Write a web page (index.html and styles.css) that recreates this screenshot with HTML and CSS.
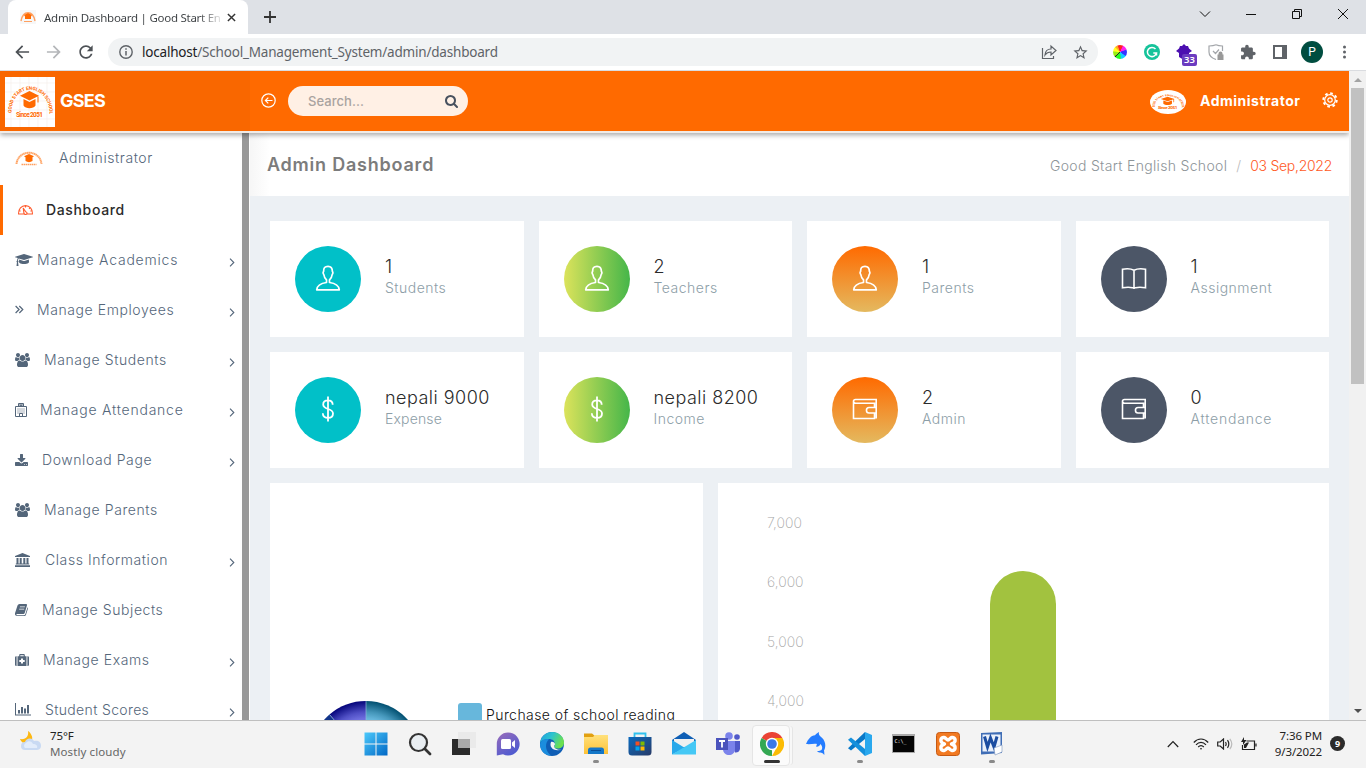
FILE: index.html
```html
<!DOCTYPE html>
<html lang="en">
<head>
<meta charset="utf-8">
<title>Admin Dashboard | Good Start English School</title>
<link rel="stylesheet" href="styles.css">
</head>
<body>
<svg class="defs" width="0" height="0">
  <defs>
    <path id="arc" d="M6.500 36C6 5 44 5 44.500 36"/>
    <linearGradient id="g-win" x2="1" y2="1"><stop stop-color="#4cc9fb"/><stop offset="1" stop-color="#0067c5"/></linearGradient>
    <linearGradient id="g-chat" x2=".6" y2="1"><stop stop-color="#9a6cba"/><stop offset="1" stop-color="#4f5bd0"/></linearGradient>
    <linearGradient id="g-edge" x1="0" y1="0" x2="1" y2=".4"><stop stop-color="#1f9ee0"/><stop offset=".5" stop-color="#2cc3cf"/><stop offset="1" stop-color="#6be04f"/></linearGradient>
    <linearGradient id="g-folder" x2="0" y2="1"><stop stop-color="#ffe17c"/><stop offset="1" stop-color="#fdc136"/></linearGradient>
    <linearGradient id="g-store" x2="1" y2="1"><stop stop-color="#0a6abf"/><stop offset="1" stop-color="#283a66"/></linearGradient>
    <radialGradient id="g-pie-a" gradientUnits="userSpaceOnUse" cx="66" cy="56" r="56"><stop offset=".68" stop-color="#6f6fdf"/><stop offset=".8" stop-color="#4f4fc5"/><stop offset="1" stop-color="#04047a"/></radialGradient>
    <radialGradient id="g-pie-b" gradientUnits="userSpaceOnUse" cx="66" cy="56" r="56"><stop offset=".68" stop-color="#67b7dc"/><stop offset=".8" stop-color="#4597bb"/><stop offset="1" stop-color="#014f70"/></radialGradient>
  </defs>
  <symbol id="cap" viewBox="0 0 2304 1792"><path d="M1774 836l18 316q4 69-82 128t-235 93.500-323 34.500-323-34.500-235-93.500-82-128l18-316 574 181q22 7 48 7t48-7zM2304 512q0 23-22 31l-1120 352q-4 1-10 1t-10-1l-652-206q-43 34-71 111.500t-34 178.500q63 36 63 109 0 69-58 107l58 433q2 14-8 25-9 11-24 11h-192q-15 0-24-11-10-11-8-25l58-433q-58-38-58-107 0-73 65-111 11-207 98-330l-333-104q-22-8-22-31t22-31l1120-352q4-1 10-1t10 1l1120 352q22 8 22 31z"/></symbol>
  <symbol id="users" viewBox="0 0 1920 1792"><path d="M593 896q-162 5-265 128h-134q-82 0-138-40.500t-56-118.500q0-353 124-353 6 0 43.500 21t97.500 42.500 119 21.500q67 0 133-23-5 37-5 66 0 139 81 256zM1664 1533q0 120-73 189.500t-194 69.500h-874q-121 0-194-69.500t-73-189.500q0-53 3.500-103.500t14-109 26.500-108.500 43-97.500 62-81 85.500-53.500 111.500-20q10 0 43 21.500t73 48 107 48 135 21.500 135-21.500 107-48 73-48 43-21.500q61 0 111.500 20t85.500 53.500 62 81 43 97.500 26.500 108.500 14 109 3.500 103.500zM640 256q0 106-75 181t-181 75-181-75-75-181 75-181 181-75 181 75 75 181zM1344 640q0 159-112.500 271.500t-271.500 112.500-271.500-112.500-112.500-271.500 112.500-271.500 271.500-112.500 271.500 112.500 112.500 271.500zM1920 865q0 78-56 118.500t-138 40.500h-134q-103-123-265-128 81-117 81-256 0-29-5-66 66 23 133 23 59 0 119-21.500t97.500-42.500 43.500-21q124 0 124 353zM1792 256q0 106-75 181t-181 75-181-75-75-181 75-181 181-75 181 75 75 181z"/></symbol>
  <symbol id="person" viewBox="0 0 26 26"><path fill="none" stroke="#fff" stroke-width="1.700" stroke-linejoin="round" d="M11.500 17.500v-2.700C9.600 13 9 11.500 8.800 9.500 7.800 8.500 8 7 8.600 6.500 8.600 3 9.800 1.300 13 1.300s4.400 1.700 4.400 5.200c.6.500.8 2-.2 3-.2 2-.8 3.500-2.700 5.300v2.700c6 .8 9.300 2.600 9.800 7.300H1.700c.5-4.700 3.800-6.500 9.800-7.300z"/></symbol>
  <symbol id="dollar" viewBox="0 0 26 26"><path fill="none" stroke="#fff" stroke-width="1.800" d="M13 .6v24.800M17.700 8.800C17.700 5.800 16 4.300 13 4.300s-4.800 1.500-4.800 4.200c0 5.800 9.800 3.200 9.800 9 0 2.800-2 4.400-5 4.400s-5.200-1.600-5.200-4.600"/></symbol>
  <symbol id="wallet" viewBox="0 0 26 26"><path fill="none" stroke="#fff" stroke-width="1.600" d="M1.500 4.500v18h21v-5M22.500 11.500V7.200H3.500C.8 7 .9 3.500 3.500 3.500h20.700v19M24.500 11.500H17c-3.400 0-3.400 5.500 0 5.500h7.500"/></symbol>
  <symbol id="book" viewBox="0 0 26 26"><path fill="none" stroke="#fff" stroke-width="1.600" d="M13 5.200C10 3.600 6 3.400 1.500 4.200v18.600c4-.8 7.500-.8 10 0h3c2.500-.8 6-.8 10 0V4.200C20 3.400 16 3.600 13 5.200zM13 5v19"/></symbol>
  <symbol id="chev" viewBox="0 0 6 9"><path fill="none" stroke="currentColor" stroke-width="1.100" d="M1 .7l3.800 3.800L1 8.300"/></symbol>
</svg>

<header class="tabstrip">
  <div class="tab">
    <svg class="favicon" viewBox="0 0 16 14"><path fill="none" stroke="#ffa060" stroke-width="1.400" d="M1 11C3 0 13 0 15 11"/><path fill="#ff6a00" d="M8 3l4 2-1 1.500V9H5V6.500L4 5z"/><path stroke="#ffa060" d="M4 11.500h8"/></svg>
    <span class="tab-title">Admin Dashboard | Good Start En</span>
    <svg class="tab-close" viewBox="0 0 10 10"><path stroke="#333" stroke-width="1.600" d="M1 1l8 8M9 1L1 9"/></svg>
  </div>
  <svg class="newtab" viewBox="0 0 12 12"><path stroke="#333" stroke-width="1.800" d="M6 0v12M0 6h12"/></svg>
  <div class="winctl">
    <svg viewBox="0 0 12 12"><path d="M1 3.500l5 5 5-5"/></svg>
    <svg viewBox="0 0 12 12"><path d="M1 6.500h10"/></svg>
    <svg viewBox="0 0 12 12"><path d="M1.500 3.500h7v7h-7zM3.500 3.500v-2h7v7h-2"/></svg>
    <svg viewBox="0 0 12 12"><path d="M1 1l10 10M11 1L1 11"/></svg>
  </div>
</header>

<div class="toolbar">
  <svg class="nav" viewBox="0 0 24 24"><path d="M20.500 11H7.830l5.590-5.590L12 4l-8 8 8 8 1.410-1.410L7.830 13H20.500z"/></svg>
  <svg class="nav off" viewBox="0 0 24 24"><path d="M3.500 11h12.670l-5.590-5.590L12 4l8 8-8 8-1.410-1.410L16.170 13H3.500z"/></svg>
  <svg class="nav" viewBox="0 0 24 24"><path d="M17.650 6.350C16.200 4.900 14.210 4 12 4c-4.420 0-7.990 3.580-7.990 8s3.570 8 7.990 8c3.730 0 6.840-2.550 7.730-6h-2.080c-.82 2.330-3.040 4-5.650 4-3.310 0-6-2.690-6-6s2.690-6 6-6c1.660 0 3.140.69 4.220 1.780L13 11h7V4l-2.350 2.350z"/></svg>
  <div class="omnibox">
    <svg class="info" viewBox="0 0 14 14"><circle cx="7" cy="7" r="6.200" fill="none" stroke="#5f6368" stroke-width="1.400"/><path stroke="#5f6368" stroke-width="1.500" d="M7 6v4.500M7 3.300v1.500"/></svg>
    <span class="url"><b>localhost</b>/School_Management_System/admin/dashboard</span>
    <svg class="share" viewBox="0 0 16 16"><path fill="none" stroke="#5f6368" stroke-width="1.200" d="M1.500 4v10.500h11V12M4 11c.3-4 2.500-6 6-6V2l5 4.500-5 4.500V8c-3 0-4.500.8-6 3z"/></svg>
    <svg class="star" viewBox="0 0 24 24"><path fill="#5f6368" d="M22 9.240l-7.190-.62L12 2 9.190 8.630 2 9.240l5.460 4.730L5.820 21 12 17.270 18.180 21l-1.630-7.030L22 9.240zM12 15.400l-3.760 2.270 1-4.280-3.320-2.880 4.380-.38L12 6.100l1.710 4.040 4.380.38-3.320 2.880 1 4.280L12 15.400z"/></svg>
  </div>
  <div class="exts">
    <i class="wheel"></i>
    <svg viewBox="0 0 16 16"><circle cx="8" cy="8" r="8" fill="#15c39a"/><path fill="none" stroke="#fff" stroke-width="1.500" d="M11.500 5A4.600 4.600 0 1 0 12.500 9H9.300M12.500 8.500v3"/></svg>
    <span class="ext-badged"><svg viewBox="0 0 16 16"><path fill="#4b0fb0" d="M8 0l2 2h2l1 2.500L16 7l-3 2v4L8 16l-5-3V9L0 7l3-2.500L4 2h2z"/></svg><em>33</em></span>
    <svg viewBox="0 0 16 16"><g fill="none" stroke="#a3a6aa" stroke-width="1.200"><path d="M8 .8C5.500 2 3 2 1 2v6c0 4 4 6.500 7 7.500M8 .8c2.500 1.200 4.500 1.200 6.500 1.200v5M5 7l2.500 2.500L11 5.500"/></g><path fill="#999" d="M9.500 10.500h1v-1a2 2 0 0 1 4 0v1h1V16h-6z"/></svg>
    <svg viewBox="1 0 22 23"><path fill="#5f6368" d="M20.500 11H19V7c0-1.100-.9-2-2-2h-4V3.500C13 2.120 11.880 1 10.500 1S8 2.120 8 3.500V5H4c-1.100 0-1.990.9-1.990 2v3.800H3.500c1.490 0 2.700 1.210 2.700 2.700s-1.210 2.700-2.700 2.700H2V20c0 1.100.9 2 2 2h3.800v-1.500c0-1.490 1.210-2.700 2.700-2.700 1.490 0 2.700 1.210 2.700 2.700V22H17c1.100 0 2-.9 2-2v-4h1.500c1.380 0 2.500-1.120 2.500-2.500S21.880 11 20.500 11z"/></svg>
    <svg viewBox="0 0 16 16"><path fill="#5f6368" fill-rule="evenodd" d="M1 1h14v14H1zM3 3v10h7V3z"/></svg>
    <b class="avatar">P</b>
    <svg viewBox="0 0 16 16"><g fill="#5f6368"><circle cx="8.500" cy="3" r="1.500"/><circle cx="8.500" cy="8" r="1.500"/><circle cx="8.500" cy="13" r="1.500"/></g></svg>
  </div>
</div>

<div class="viewport">
  <div class="page">
    <header class="topbar">
      <div class="brand">
        <svg class="brand-logo" viewBox="0 0 50 50">
          <path stroke="#f3ece8" stroke-width=".6" d="M6 0v50M15 0v50M24 0v50M33 0v50M42 0v50M0 6h50M0 15h50M0 24h50M0 33h50M0 42h50"/>
          <path fill="#ff6a00" d="M24.500 14l9.500 4.700-9.500 4.700-9.500-4.700zM18.500 22l6 3 6-3v6.500c-2 3.500-10 3.500-12 0zM32.500 19.500h1v6h-1z"/>
          <text class="crest-arc"><textPath href="#arc" textLength="68">GOOD START ENGLISH SCHOOL</textPath></text>
          <text class="crest-year" x="11" y="40" textLength="27">Since 2051</text>
        </svg>
        <strong>GSES</strong>
      </div>
      <svg class="collapse" viewBox="0 0 15 15"><path fill="none" stroke="#fff" stroke-width="1.200" d="M7.500.8a6.700 6.700 0 1 1 0 13.400a6.700 6.700 0 1 1 0-13.400M11.500 7.500h-7M7.300 4.600L4.400 7.500l2.900 2.900"/></svg>
      <div class="search"><span>Search...</span><svg viewBox="64 128 1664 1664"><path d="M1216 832q0-185-131.500-316.500t-316.500-131.500-316.500 131.500-131.500 316.500 131.500 316.500 316.500 131.500 316.500-131.500 131.500-316.500zm512 832q0 52-38 90t-90 38q-54 0-90-38l-343-342q-179 124-399 124-143 0-273.500-55.500t-225-150-150-225-55.500-273.500 55.500-273.500 150-225 225-150 273.500-55.500 273.500 55.500 225 150 150 225 55.500 273.500q0 220-124 399l343 343q37 37 37 90z"/></svg></div>
      <svg class="user-logo" viewBox="0 0 50 50" preserveAspectRatio="none">
        <path fill="#ff6a00" d="M24.500 14l9.500 4.700-9.500 4.700-9.500-4.700zM18.500 22l6 3 6-3v6.500c-2 3.500-10 3.500-12 0zM32.500 19.500h1v6h-1z"/>
        <text class="crest-arc"><textPath href="#arc" textLength="68">GOOD START ENGLISH SCHOOL</textPath></text>
        <text class="crest-year" x="11" y="40" textLength="27">Since 2051</text>
      </svg>
      <strong class="user-name">Administrator</strong>
      <svg class="gear" viewBox="0 0 16 16"><g fill="none" stroke="#fff"><circle cx="8" cy="8" r="5.300" stroke-width="1.200"/><circle cx="8" cy="8" r="2.200" stroke-width="1.200"/><circle cx="8" cy="8" r="6.700" stroke-width="2" stroke-dasharray="2.630"/></g></svg>
    </header>
    <div class="body">
      <nav class="side">
        <a class="profile"><svg class="mini" viewBox="0 0 28 16"><path fill="none" stroke="#ffa668" stroke-width="2" stroke-dasharray="1.500 .3" d="M1.500 13C3-2 25-2 26.500 13"/><path fill="#ff6a00" d="M14 3l5 2.300-1.500 1V10c-2 1.500-5 1.500-7 0V6.300l-1.500-1z"/><path stroke="#ffa060" stroke-width="1.500" stroke-dasharray="1.500 .5" d="M6.500 13.500h15"/></svg><span>Administrator</span></a>
        <a class="active"><i class="w28"><svg width="15" height="10" viewBox="0 0 15 10"><path fill="none" stroke="#ff5a2c" stroke-width="1.100" d="M6 9H.6C.3 4 3.500.6 7.500.6S14.700 4 14.400 9H9M6 8.500a1.600 1.600 0 0 0 3 0 1.600 1.600 0 0 0-1.300-1.800L5.200 3zM7.500.6v2M.8 6h1.800M12.400 6h1.800M12.200 2.700L11 3.900"/></svg></i><span>Dashboard</span></a>
        <a><i class="w22"><svg width="18" height="14"><use href="#cap"/></svg></i><span class="wide">Manage Academics</span><svg class="chev"><use href="#chev"/></svg></a>
        <a><i class="w22"><svg width="9" height="9" viewBox="0 0 9 9"><path fill="none" stroke="currentColor" stroke-width="1.200" d="M.6 1l3.500 3.500L.6 8M4.300 1l3.500 3.500L4.300 8"/></svg></i><span>Manage Employees</span><svg class="chev"><use href="#chev"/></svg></a>
        <a><i class="w29"><svg width="15" height="14"><use href="#users"/></svg></i><span>Manage Students</span><svg class="chev"><use href="#chev"/></svg></a>
        <a><i class="w25"><svg width="12" height="14" viewBox="0 0 12 14"><path fill="none" stroke="currentColor" d="M.5 13.500v-10h11v10zM3.500 3.500v-3h5v3M4.500 13.500v-3h3v3"/><path stroke="currentColor" stroke-dasharray="1 1" d="M2.500 6h7M2.500 8h7M2.500 10h7"/><path stroke="currentColor" d="M5 1v2.500M7 1v2.500M5 2.300h2"/></svg></i><span class="wide">Manage Attendance</span><svg class="chev"><use href="#chev"/></svg></a>
        <a><i class="w27"><svg width="13" height="12" viewBox="64 0 1664 1536"><path d="M1344 1344q0-26-19-45t-45-19-45 19-19 45 19 45 45 19 45-19 19-45zM1600 1344q0-26-19-45t-45-19-45 19-19 45 19 45 45 19 45-19 19-45zM1728 1120v320q0 40-28 68t-68 28h-1472q-40 0-68-28t-28-68v-320q0-40 28-68t68-28h465l135 136q58 56 136 56t136-56l136-136h464q40 0 68 28t28 68zM1403 551q17 41-14 70l-448 448q-18 19-45 19t-45-19l-448-448q-31-29-14-70 17-39 59-39h256v-448q0-26 19-45t45-19h256q26 0 45 19t19 45v448h256q42 0 59 39z" fill-rule="evenodd"/></svg></i><span>Download Page</span><svg class="chev"><use href="#chev"/></svg></a>
        <a><i class="w29"><svg width="15" height="14"><use href="#users"/></svg></i><span>Manage Parents</span></a>
        <a><i class="w30"><svg width="15" height="14" viewBox="0 0 15 14"><path d="M7.500 0L15 3v1H0V3zM1.500 5h2v5.500h1.200V5h2v5.500h1.600V5h2v5.500h1.200V5h2v5.500h.7v1H.8v-1h.7zM0 12.300h15V14H0z"/></svg></i><span>Class Information</span><svg class="chev"><use href="#chev"/></svg></a>
        <a><i class="w27"><svg width="13" height="12" viewBox="0 0 13 12"><path fill-rule="evenodd" d="M4.500 0H11q1.300 0 1 1.300L9.700 9q-.4 1-1.300 1H2q-.8 0-.5.700t1 .5h6.500q1 0 1.300-1l2.300-7q.6.500.3 1.500l-2 6.300q-.4 1-1.300 1H2q-2.500-.5-2-2.800L2.500 1.500Q3 0 4.500 0zM5 2.500l-.2.800h5l.2-.8zM4.300 4.700l-.2.800h5l.2-.8z"/></svg></i><span>Manage Subjects</span></a>
        <a><i class="w28"><svg width="14" height="12" viewBox="0 0 14 12"><path fill-rule="evenodd" d="M0 3.500Q0 2.200 1.300 2.200H1.600V12H1.300Q0 12 0 10.800zM2.500 2.200H4.200V1Q4.200 0 5.200 0H8.800Q9.800 0 9.800 1v1.200h1.700V12h-9zM5.300 1.200v1h3.400v-1zM6 4.500V6H4.300v2H6v1.500h2V8h1.700V6H8V4.500zM12.400 2.200h.3Q14 2.200 14 3.500v7.300Q14 12 12.700 12h-.3z"/></svg></i><span>Manage Exams</span><svg class="chev"><use href="#chev"/></svg></a>
        <a><i class="w30"><svg width="16" height="13" viewBox="0 0 16 13"><path d="M0 0h1v11.500h15v1H0zM3 7h2v3.500H3zM6 4h2v6.500H6zM9 5.500h2v5H9zM12 2h2v8.500h-2z"/></svg></i><span class="tight">Student Scores</span><svg class="chev"><use href="#chev"/></svg></a>
      </nav>
      <div class="side-scroll"></div>
      <main>
        <div class="title-row"><h1>Admin Dashboard</h1><p><span class="school">Good Start English School</span><span class="slash">/</span><span class="date">03 Sep,2022</span></p></div>
        <div class="content">
          <section class="cards">
            <article><i class="teal"><svg><use href="#person"/></svg></i><div><h3>1</h3><p>Students</p></div></article>
            <article><i class="green"><svg><use href="#person"/></svg></i><div><h3>2</h3><p>Teachers</p></div></article>
            <article><i class="amber"><svg><use href="#person"/></svg></i><div><h3>1</h3><p>Parents</p></div></article>
            <article><i class="slate"><svg><use href="#book"/></svg></i><div><h3>1</h3><p>Assignment</p></div></article>
            <article><i class="teal"><svg><use href="#dollar"/></svg></i><div><h3>nepali 9000</h3><p class="tight">Expense</p></div></article>
            <article><i class="green"><svg><use href="#dollar"/></svg></i><div><h3>nepali 8200</h3><p>Income</p></div></article>
            <article><i class="amber"><svg><use href="#wallet"/></svg></i><div><h3>2</h3><p>Admin</p></div></article>
            <article><i class="slate"><svg><use href="#wallet"/></svg></i><div><h3>0</h3><p class="wide">Attendance</p></div></article>
          </section>
          <section class="charts">
            <div class="pie-card">
              <svg class="pie" viewBox="0 0 132 132"><path fill="url(#g-pie-b)" d="M66 56V0A56 56 0 0 1 122 56z"/><path fill="url(#g-pie-a)" d="M66 56V0A56 56 0 0 0 29.500 13.500z"/><path fill="#12348a" d="M66 56L29.500 13.500A56 56 0 0 0 10 56z"/><path fill="none" stroke="#8fb4dc" stroke-width=".7" d="M66 0v56M29.500 13.500L66 56"/></svg>
              <div class="legend"><i></i><span>Purchase of school reading</span></div>
            </div>
            <div class="bar-card">
              <ol><li>7,000</li><li>6,000</li><li>5,000</li><li>4,000</li></ol>
              <div class="bar"></div>
            </div>
          </section>
        </div>
      </main>
    </div>
  </div>
  <div class="scrollbar"><i class="up"></i><i class="thumb"></i><i class="down"></i></div>
</div>

<footer class="taskbar">
  <div class="weather">
    <svg viewBox="0 0 22 20"><path fill="#fdb813" d="M9 0c1 5-2 9-8 8 2 6 10 6 12 1C14 6 12 2 9 0z"/><path fill="#c9daf3" d="M6 19a4 4 0 0 1 0-8c1-4 7-5 9-1 4-1 7 1 7 4.500S20 19 17 19z"/><path fill="#e3edfb" d="M6 17a3 3 0 0 1 1-5c2-3 6-2 7 1 3 0 5 2 4 4z"/></svg>
    <div><b>75°F</b><span>Mostly cloudy</span></div>
  </div>
  <div class="apps">
    <span><svg viewBox="0 0 24 24"><path fill="url(#g-win)" d="M.5.500h11v11H.5zM12.500.5h11v11h-11zM.5 12.500h11v11H.5zM12.500 12.500h11v11h-11z"/></svg></span>
    <span><svg viewBox="0 0 24 24"><circle cx="10.500" cy="10.500" r="8.500" fill="#e9eef2" stroke="#333" stroke-width="2.200"/><path stroke="#333" stroke-width="2.800" stroke-linecap="round" d="M17 17l5 5"/></svg></span>
    <span><svg viewBox="0 0 24 24"><path fill="#2b2b2b" d="M0 7h18v16H0z"/><path fill="#e9e9e9" opacity=".9" d="M6 0h18v16H6z"/><path fill="#a9a9a9" d="M6 7h12v9H6z"/></svg></span>
    <span><svg viewBox="0 0 24 24"><path fill="url(#g-chat)" d="M12 .5a11.500 11.500 0 1 1-5 21.800L.8 23.500V12A11.300 11.300 0 0 1 12 .5z"/><rect x="5" y="7" width="10" height="10" rx="1.500" fill="#fff"/><path fill="#fff" d="M16 10.500L19 8v8l-3-2.500z"/></svg></span>
    <span><svg viewBox="0 0 24 24"><circle cx="12" cy="12" r="12" fill="#0f5eb5"/><path fill="url(#g-edge)" d="M0 11C1 4 6 0 12 0c7 0 12 5 12 10.500 0 4-3 6-6.500 6-3 0-4-1.500-3-3C16 9 12 7 9 7c-4 0-7 1-9 4z"/><path fill="#1b8ddd" d="M0 12c2-5 6-5.500 9-4.500-4 3-4.500 11 2 16C4 23.500 0 18 0 12z"/><path fill="#f3f3f3" d="M11 10c-2 5 2 10 11.500 7.500-2 .5-5 .5-7-1s-1.500-3-.5-4c0-2-2-3-4-2.500z"/></svg></span>
    <span class="open"><svg viewBox="0 0 24 24"><path fill="#e2a010" d="M0 1.500h8L11 4v5H0z"/><path fill="url(#g-folder)" d="M0 5h9l2-2h13v19H0z"/><path fill="#1477c8" d="M4 22v-4q0-2.500 2.500-2.500h11Q20 15.500 20 18v4z"/><path stroke="#0a4e97" d="M7 18.500h10"/></svg></span>
    <span><svg viewBox="0 0 24 24"><path fill="none" stroke="#2fc1ee" stroke-width="1.800" d="M6.500 5V1.500h11V5"/><path fill="url(#g-store)" d="M.5 5h23v15q0 3.500-3.500 3.500H4Q.5 23.500.5 20z"/><path fill="#f25022" d="M7.500 9.500h4v4h-4z"/><path fill="#7fba00" d="M12.500 9.500h4v4h-4z"/><path fill="#00a4ef" d="M7.500 14.500h4v4h-4z"/><path fill="#ffb900" d="M12.500 14.500h4v4h-4z"/></svg></span>
    <span><svg viewBox="0 0 24 24"><path fill="#0f5fb5" d="M0 8l12-8 12 8v8H0z"/><path fill="#f0f0f0" d="M2 7h20v8H2z"/><path fill="#27a8ea" d="M0 8l13 8-13 6.500z"/><path fill="#45c8f5" d="M24 8v14.500H0z"/></svg></span>
    <span><svg viewBox="0 0 24 24"><circle cx="13" cy="4" r="3.800" fill="#7b83eb"/><circle cx="21" cy="5" r="2.800" fill="#5059c9"/><path fill="#5059c9" d="M15 9h9v8q-1 4-5 3.500z"/><path fill="#7b83eb" d="M7 9h12v8c0 8-12 8-12 0z"/><path fill="#4b53bc" d="M0 6h12v12H0z"/><path stroke="#fff" stroke-width="1.800" d="M3 9h6M6 9v6.500"/></svg></span>
    <span class="current"><svg viewBox="0 0 24 24"><path fill="#ea4335" d="M12 12L1.600 6A12 12 0 0 1 22.400 6z"/><path fill="#34a853" d="M12 12L12 24A12 12 0 0 1 1.600 6z"/><path fill="#fbbc05" d="M12 6h10.400A12 12 0 0 1 12 24l5-9z"/><circle cx="12" cy="12" r="6.200" fill="#fff"/><circle cx="12" cy="12" r="4.800" fill="#3b78e7"/></svg></span>
    <span><svg viewBox="0 0 24 24"><path fill="#247cff" d="M2 12c2-5 5-8.500 9-8.800C12.500 1.500 14 .5 15 0c-.5 2 0 3 1.500 4.500 5 3.500 6 10 3.500 14 .3 2 .5 3 .3 4.500-1.500-1.800-2.800-2.500-4-2.500-1.300 0-2.300-.3-3.300-1.500 3 0 4.500-.5 5-2 .7-2-.5-4-1.500-5-.5 1.500-2 2.500-4 3-.3-1.200 0-2 .5-3C10 11.500 6 12.500 2 12z"/></svg></span>
    <span class="open"><svg viewBox="0 0 24 24"><path fill="#29a8ee" d="M17 0l7 3v18l-7 3z"/><path fill="#0878c8" d="M17 0v7L3 18.500l-3-2.300z"/><path fill="#1590dc" d="M0 7.800L3 5.500 17 17v7z"/></svg></span>
    <span><svg viewBox="0 0 24 24"><path fill="#aaa" d="M0 2h23v19H0z"/><path fill="#050505" d="M1 4h21v16H1z"/><text class="cmd" x="2.500" y="10.500">C:\_</text></svg></span>
    <span><svg viewBox="0 0 24 24"><rect x=".5" y=".5" width="23" height="23" rx="3" fill="#f27a22" stroke="#c65a14"/><path fill="none" stroke="#fff" stroke-width="3.400" stroke-linejoin="round" d="M8.500 12C3 10.500 4.500 5 8 5.500c2 .3 2.500 2.500 4 2.500s2-2.200 4-2.500c3.500-.5 5 5-.500 6.500 5.500 1.500 4 7 .5 6.500-2-.3-2.500-2.500-4-2.500s-2 2.200-4 2.500c-3.500.5-5-5 .5-6.500z"/></svg></span>
    <span class="open"><svg viewBox="0 0 24 24"><path fill="#3f6db5" d="M1 1l21-1v21l-21 1.500z"/><path fill="#eaf1fb" d="M2.500 2.500h18v17h-18z"/><path fill="none" stroke="#1c4da1" stroke-width="3" d="M4.500 4.500L7.500 15l3-9L14 15l3-10.500"/><path fill="#fff" stroke="#7a93bd" stroke-width=".6" d="M14 16l8-3v7l-7 3z"/></svg></span>
  </div>
  <div class="tray">
    <svg class="caret" viewBox="0 0 12 8"><path d="M.8 7L6 1.500 11.200 7"/></svg>
    <svg class="wifi" viewBox="0 0 16 12"><path d="M.8 4.500C5-.2 11-.2 15.200 4.500M3 6.800c3-3.200 7-3.200 10 0M5.200 9c1.700-1.900 3.900-1.900 5.600 0"/><circle cx="8" cy="10.700" r=".8"/></svg>
    <svg class="vol" viewBox="0 0 16 12"><path d="M.7 4h2.500L6.500 1v10L3.200 8H.7zM8.500 4q1.300 2 0 4M10.500 2.200q2.600 3.800 0 7.600"/><path class="faint" d="M12.800.8q4 5.200 0 10.400"/></svg>
    <svg class="bat" viewBox="0 0 16 14"><path d="M5.500 4H13.500v8.500H1.500V8M15 6.500v3"/><path class="solid" d="M3 0L0 5h2v3l3.500-5H3zM3 11V7.500l3-2h2L5 11z"/></svg>
    <div class="clock"><span>7:36 PM</span><span>9/3/2022</span></div>
    <b class="count">9</b>
  </div>
</footer>
</body>
</html>
```
FILE: styles.css
```css
* { box-sizing: border-box; }
body { margin: 0; width: 1366px; height: 768px; overflow: hidden; display: flex; flex-direction: column; background: #fff; font-family: "Noto Sans", sans-serif; }
svg { display: block; flex: none; }
h1, h3, p, ol { margin: 0; padding: 0; }
i { font-style: normal; display: block; }
.defs { position: absolute; }
.crest-arc { font: 700 4.800px Roboto, sans-serif; fill: #ff6a00; }
.crest-year { font: 700 6.500px Roboto, sans-serif; fill: #ff6a00; }

/* browser frame */
.tabstrip { height: 34px; flex: none; background: #dee1e6; display: flex; align-items: center; padding-left: 8px; }
.tab { width: 240px; height: 34px; background: #fff; border-radius: 8px 8px 0 0; display: flex; align-items: center; padding-left: 12px; }
.favicon { width: 16px; height: 14px; background: #f7f7f7; }
.tab-title { width: 176px; margin: 0 7px 0 8px; white-space: nowrap; font-size: 11.500px; letter-spacing: -.26px; color: transparent; background: linear-gradient(90deg, #3c4043 88%, #ddd 100%); -webkit-background-clip: text; background-clip: text; }
.tab-close { width: 9px; height: 9px; }
.newtab { width: 12px; height: 12px; margin-left: 16px; }
.winctl { margin-left: auto; display: flex; gap: 34px; padding: 0 17px 6px 0; }
.winctl svg { width: 12px; height: 12px; }
.winctl path { fill: none; stroke: #111; }
.toolbar { height: 36px; flex: none; display: flex; align-items: center; padding-left: 12px; }
.nav { width: 20px; height: 20px; margin-right: 12px; fill: #4d5156; }
.nav.off { fill: #b4b6b9; }
.omnibox { width: 990px; height: 28px; border-radius: 14px; background: #f1f3f4; display: flex; align-items: center; padding-left: 11px; }
.info { width: 14px; height: 14px; }
.url { flex: 1; margin-left: 9px; font-size: 13.500px; letter-spacing: -.2px; color: #5f6368; white-space: nowrap; }
.url b { font-weight: 400; color: #202124; }
.share { width: 16px; height: 16px; margin-right: 15px; }
.star { width: 17px; height: 17px; margin-right: 9px; }
.exts { display: grid; grid-template-columns: repeat(8, 32px); align-items: center; justify-items: center; margin-left: 6px; }
.exts svg { width: 16px; height: 16px; }
.wheel { width: 14px; height: 14px; border-radius: 50%; background: conic-gradient(#f22 20deg, #f2e 30deg 65deg, #33f 75deg 120deg, #1cf 130deg 165deg, #2f2 180deg 220deg, #222 225deg, #9e1 235deg 270deg, #ff2 280deg 310deg, #fa2 320deg 335deg, #f22 345deg); }
.ext-badged { position: relative; }
.ext-badged em { position: absolute; left: 6px; top: 10px; width: 15px; height: 12px; border-radius: 2px; background: #6b3bc0; color: #fff; font: 600 9.500px/12px "Noto Sans", sans-serif; text-align: center; }
.avatar { width: 22px; height: 22px; border-radius: 50%; background: #004d40; color: #fff; font: 400 12px/22px Roboto, sans-serif; text-align: center; }

/* page */
.viewport { height: 650px; flex: none; display: flex; overflow: hidden; border-top: 1px solid #dadce0; font-family: Inter, sans-serif; }
.page { width: 1349px; height: 649px; overflow: hidden; display: flex; flex-direction: column; }
.topbar { position: relative; z-index: 2; height: 62px; flex: none; background: #ff6a00; border-bottom: 2px solid #f1ebe6; box-shadow: 0 2px 5px rgba(0,0,0,.35); display: flex; align-items: center; color: #fff; }
.brand { width: 250px; height: 60px; background: #f96700; display: flex; align-items: center; gap: 5px; padding-left: 5px; }
.brand-logo { width: 50px; height: 50px; background: #fff; margin-top: 2px; }
.brand strong { font-size: 18px; letter-spacing: -.75px; padding-bottom: 1px; }
.collapse { width: 15px; height: 15px; margin: 0 12px 2px 11px; }
.search { width: 180px; height: 30px; border-radius: 15px; background: #fff0e5; display: flex; align-items: center; justify-content: space-between; padding: 0 10px 0 20px; font-size: 13px; font-weight: 500; letter-spacing: .05px; color: #a9a3a0; }
.search span { padding-bottom: 1px; }
.search svg { width: 13px; height: 13px; fill: #48515f; }
.user-logo { width: 36px; height: 24px; border-radius: 50%; background: #fff; margin: 2px 14px 0 auto; }
.user-name { width: 100px; font-size: 14px; font-weight: 700; letter-spacing: .5px; white-space: nowrap; padding-bottom: 1px; }
.gear { width: 16px; height: 16px; margin: 0 11px 3px 22px; }
.body { flex: 1; display: flex; min-height: 0; }
.side { width: 242px; overflow: hidden; color: #54667a; }
.side a { height: 50px; display: flex; align-items: center; padding-left: 15px; font-size: 14px; font-weight: 300; letter-spacing: .58px; white-space: nowrap; }
.side a span { padding-bottom: 2px; }
.side .wide { letter-spacing: .77px; }
.side .tight { letter-spacing: .35px; }
.side a i { padding-bottom: 1px; }
.side a i svg { fill: currentColor; }
.side .profile { height: 52px; }
.side .profile span { padding-bottom: 3px; }
.mini { width: 28px; height: 16px; margin-right: 16px; }
.side .active { border-left: 3px solid #ff6a00; color: #2b2b2b; font-weight: 500; letter-spacing: .65px; }
.w22 { width: 22px; } .w25 { width: 25px; } .w27 { width: 27px; } .w28 { width: 28px; } .w29 { width: 29px; } .w30 { width: 30px; }
.chev { width: 6px; height: 9px; margin: 4px 7px 0 auto; }
.side-scroll { width: 8px; background: #999; border-right: 1px solid #fff; }
main { flex: 1; background: #ecf0f4; }
.title-row { height: 63px; background: linear-gradient(90deg, #f6f6f6, #fff 20px); display: flex; align-items: center; justify-content: space-between; padding: 0 17px; }
h1 { font-size: 18px; font-weight: 600; letter-spacing: .78px; color: #7c7c7c; }
.title-row p { display: flex; font-size: 14px; font-weight: 300; padding-top: 2px; }
.school { color: #8d9498; letter-spacing: .32px; }
.slash { color: #bbb; margin: 0 9px; }
.date { color: #ff5a26; letter-spacing: -.27px; }
.content { padding: 25px 20px; }
.cards { display: grid; grid-template-columns: repeat(4, 1fr); grid-auto-rows: 116px; gap: 15px; }
.cards article { background: #fff; display: flex; padding: 25px; gap: 24px; }
.cards i { width: 66px; height: 66px; border-radius: 50%; display: flex; align-items: center; justify-content: center; padding-bottom: 2px; }
.cards i svg { width: 26px; height: 26px; }
.teal { background: #01c0c8; }
.green { background: linear-gradient(90deg, #dce35b, #45b649); }
.amber { background: linear-gradient(#ff6a00, #e4b95f); }
.slate { background: #4c5667; }
.cards h3 { font-size: 18px; font-weight: 300; line-height: 24px; letter-spacing: .48px; margin-top: 9px; color: #2b2b2b; white-space: nowrap; }
.cards p { font-size: 14px; font-weight: 300; line-height: 18px; letter-spacing: .5px; color: #8d9ea7; }
.cards .wide { letter-spacing: .8px; }
.cards .tight { letter-spacing: .15px; }
.charts { display: grid; grid-template-columns: 433px 1fr; gap: 15px; margin-top: 15px; height: 300px; }
.charts > div { background: #fff; display: flex; }
.pie { width: 132px; height: 132px; margin: 218px 0 0 30px; }
.legend { display: flex; gap: 4px; margin: 220px 0 0 26px; }
.legend i { width: 24px; height: 24px; border-radius: 3px; background: #67b7dc; }
.legend span { font-size: 14px; font-weight: 300; line-height: 24px; letter-spacing: .43px; color: #111; white-space: nowrap; }
.bar-card ol { list-style: none; width: 222px; padding: 30px 0 0 49px; margin-right: 50px; font-size: 14px; font-weight: 200; color: #a5a5a5; }
.bar-card li { height: 59.300px; line-height: 20px; }
.bar { width: 66px; height: 220px; margin-top: 88px; border-radius: 33px 33px 0 0; background: #a2c23f; }
.scrollbar { width: 17px; background: #f1f1f1; display: flex; flex-direction: column; align-items: center; }
.up { border: 4px solid transparent; border-top: 0; border-bottom: 4px solid #a3a3a3; margin: 7px 0 6px; }
.thumb { width: 13px; height: 296px; background: #c1c1c1; }
.down { border: 4px solid transparent; border-bottom: 0; border-top: 4px solid #505050; margin: auto 0 7px; }

/* taskbar */
.taskbar { height: 48px; flex: none; background: #f3f3f3; border-top: 1px solid #bfbfbf; display: grid; grid-template-columns: 354px 660px 1fr; align-items: center; }
.weather { display: flex; gap: 9px; padding: 0 0 2px 19px; align-items: center; }
.weather svg { width: 22px; height: 20px; margin-bottom: 6px; }
.weather b, .weather span { display: block; font-size: 11.500px; line-height: 16px; font-weight: 400; color: #222; letter-spacing: -.1px; }
.weather span { color: #666; letter-spacing: .1px; }
.apps { display: grid; grid-template-columns: repeat(15, 44px); height: 47px; }
.apps span { position: relative; display: flex; align-items: center; justify-content: center; padding-bottom: 1px; }
.apps svg { width: 24px; height: 24px; }
.cmd { font: 5px "DejaVu Sans Mono", monospace; fill: #fff; }
.open::after, .current::after { content: ""; position: absolute; left: 19px; top: 39px; width: 6px; height: 3px; border-radius: 2px; background: #8a8a8a; }
.current::after { left: 14px; width: 16px; background: #333; }
.current::before { content: ""; position: absolute; left: 2px; top: 4px; width: 36px; height: 39px; border-radius: 4px; background: #fbfbfb; border: 1px solid #e5e5e5; box-shadow: 3px 0 0 -1px #f8f8f8, 4px 0 0 -1px #e5e5e5; }
.current svg { position: relative; }
.tray { display: flex; align-items: center; padding: 0 0 2px 153px; }
.tray path { fill: none; stroke: #222; stroke-width: 1.200; }
.tray .faint { stroke: #bbb; }
.tray .solid { fill: #222; stroke: none; }
.caret { width: 12px; height: 8px; margin-right: 14px; }
.wifi { width: 16px; height: 12px; margin-right: 8px; }
.vol { width: 16px; height: 12px; margin-right: 8px; }
.bat { width: 16px; height: 14px; }
.clock { width: 65px; text-align: right; }
.clock span { display: block; font-size: 11.500px; line-height: 16px; letter-spacing: -.1px; color: #222; }
.count { width: 15px; height: 15px; border-radius: 50%; background: #2b2b2b; color: #fff; font-size: 9px; line-height: 15px; text-align: center; margin-left: 8px; }
```
